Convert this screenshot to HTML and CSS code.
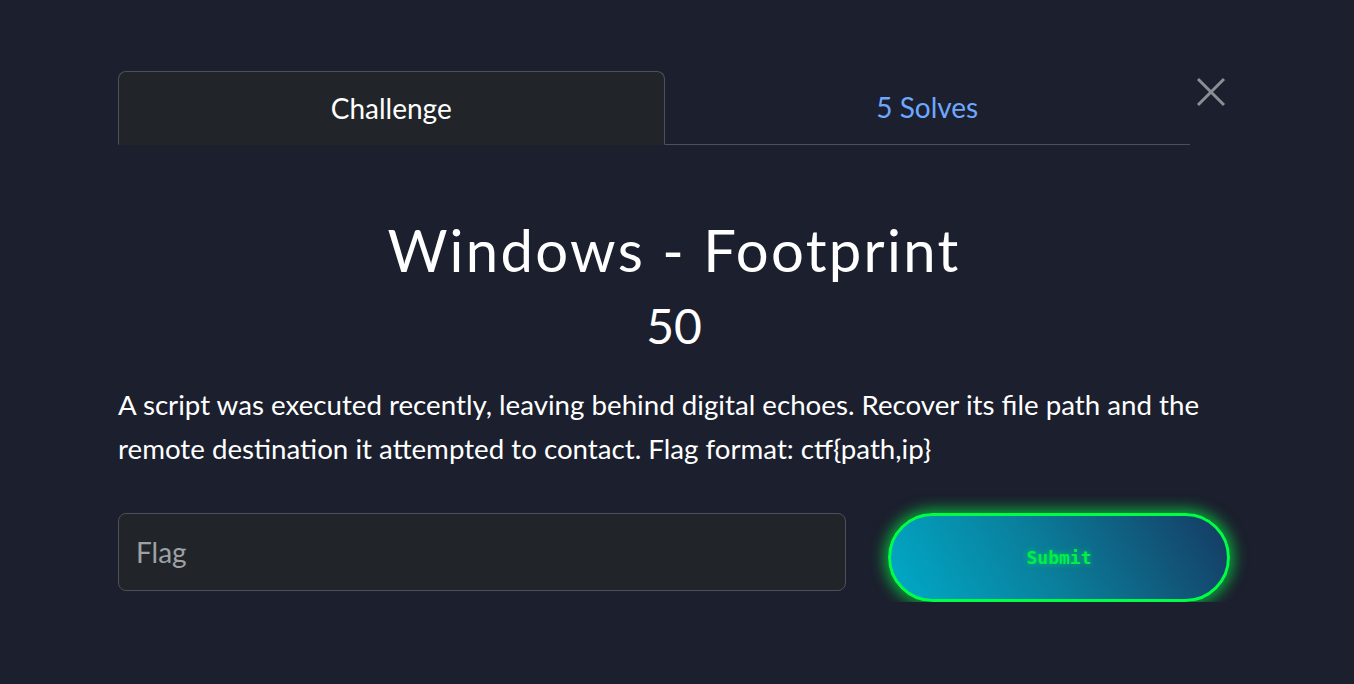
FILE: index.html
```html
<!DOCTYPE html>
<html>
<head>
<meta charset="utf-8">
<link rel="stylesheet" href="styles.css">
</head>
<body>
<div class="modal">
  <div class="header">
    <nav class="tabs">
      <div class="tab active">Challenge</div>
      <div class="tab link">5 Solves</div>
    </nav>
    <button class="close" aria-label="Close">
      <svg width="30" height="30" viewBox="0 0 30 30"><path d="M2 2 L28 28 M28 2 L2 28" stroke="#8b8e93" stroke-width="3" fill="none"/></svg>
    </button>
  </div>
  <h2 class="title">Windows - Footprint</h2>
  <div class="value">50</div>
  <p class="desc">A script was executed recently, leaving behind digital echoes. Recover its file path and the remote destination it attempted to contact. Flag format: ctf{path,ip}</p>
  <div class="form">
    <input class="flag" type="text" placeholder="Flag">
    <button class="submit">Submit</button>
  </div>
</div>
</body>
</html>
```
FILE: styles.css
```css
html, body {
  margin: 0;
  padding: 0;
  background: #1b1f2e;
  font-family: Lato, "Open Sans", sans-serif;
  color: #ffffff;
}
.modal {
  width: 1112px;
  margin-left: 118px;
  padding-top: 71px;
}
.header {
  display: flex;
  align-items: flex-start;
}
.tabs {
  display: flex;
  width: 1072px;
  border-bottom: 1px solid #4c5058;
}
.tab {
  flex: 1 1 auto;
  text-align: center;
  height: 72px;
  line-height: 72px;
  font-size: 28px;
  box-sizing: border-box;
  margin-bottom: -1px;
}
.tab.active {
  background: #212529;
  border: 1px solid #4c5058;
  border-bottom-color: #212529;
  border-radius: 8px 8px 0 0;
  color: #ffffff;
  height: 74px;
}
.tab.link {
  color: #6ea8fe;
}
.close {
  background: none;
  border: 0;
  padding: 0;
  margin-left: 6px;
  margin-top: 6px;
  width: 30px;
  height: 30px;
  cursor: pointer;
}
.close svg { display: block; }
.title {
  margin: 70px 0 0;
  text-align: center;
  font-weight: 400;
  font-size: 58px;
  letter-spacing: 2.3px;
  line-height: 70px;
}
.value {
  text-align: center;
  font-size: 48px;
  line-height: 60px;
  margin-top: 11px;
}
.desc {
  margin: 27px 0 0;
  font-size: 27.7px;
  line-height: 44px;
}
.form {
  display: flex;
  align-items: flex-start;
  gap: 42px;
  margin-top: 42px;
}
.flag {
  width: 728px;
  height: 78px;
  box-sizing: border-box;
  background: #212529;
  border: 1px solid #4c5058;
  border-radius: 8px;
  padding: 0 17px;
  font-family: Lato, sans-serif;
  font-size: 28px;
  color: #fff;
  outline: none;
}
.flag::placeholder { color: #9da1a7; }
.submit {
  width: 342px;
  height: 89px;
  border-radius: 45px;
  border: 3px solid #00ff44;
  background: linear-gradient(60deg, #00aac8 0%, #0a7f9c 45%, #163a62 100%);
  box-shadow: 0 0 14px 4px rgba(0, 255, 68, 0.6);
  color: #00f044;
  font-family: "DejaVu Sans Mono", monospace;
  font-weight: bold;
  font-size: 18px;
  text-shadow: 0 0 6px rgba(0, 255, 68, 0.6);
  cursor: pointer;
}
```
